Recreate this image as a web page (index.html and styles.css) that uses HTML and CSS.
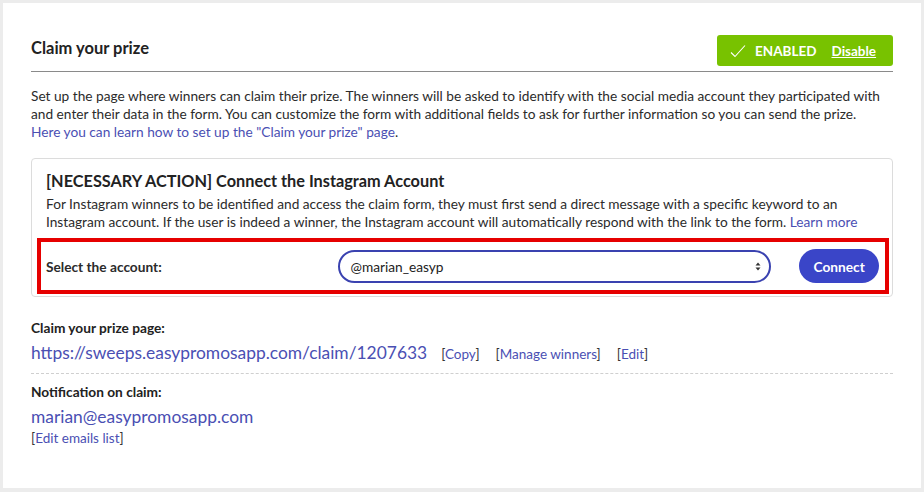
FILE: index.html
```html
<!DOCTYPE html>
<html>
<head>
<meta charset="utf-8">
<link rel="stylesheet" href="styles.css">
</head>
<body>
<div class="panel">
  <div class="header">
    <h1 class="title">Claim your prize</h1>
    <div class="badge">
      <svg class="check" width="16" height="14" viewBox="0 0 16 14"><path d="M1 8.5 L5 12.5 L15 1.5" fill="none" stroke="#fff" stroke-width="1.1"/></svg>
      <span class="badge-state">ENABLED</span>
      <a class="badge-link" href="#">Disable</a>
    </div>
  </div>
  <p class="intro">Set up the page where winners can claim their prize. The winners will be asked to identify with the social media account they participated with and enter their data in the form. You can customize the form with additional fields to ask for further information so you can send the prize.<br><a class="link" href="#">Here you can learn how to set up the "Claim your prize" page</a>.</p>
  <div class="action-box">
    <h2 class="action-title">[NECESSARY ACTION] Connect the Instagram Account</h2>
    <p class="action-text">For Instagram winners to be identified and access the claim form, they must first send a direct message with a specific keyword to an Instagram account. If the user is indeed a winner, the Instagram account will automatically respond with the link to the form. <a class="link" href="#">Learn more</a></p>
    <div class="account-row">
      <label class="account-label">Select the account:</label>
      <div class="select">
        <span>@marian_easyp</span>
        <svg class="arrows" width="6" height="9" viewBox="0 0 6 9"><path d="M0.5 3.5 L3 0.5 L5.5 3.5 Z M0.5 5.5 L3 8.5 L5.5 5.5 Z" fill="#333"/></svg>
      </div>
      <button class="connect">Connect</button>
    </div>
  </div>
  <div class="info">
    <div class="info-label">Claim your prize page:</div>
    <div class="url-row">
      <a class="big-link" href="#">https://sweeps.easypromosapp.com/claim/1207633</a>
      <span class="bracket">[<a class="link" href="#">Copy</a>]</span>
      <span class="bracket">[<a class="link" href="#">Manage winners</a>]</span>
      <span class="bracket">[<a class="link" href="#">Edit</a>]</span>
    </div>
  </div>
  <div class="info info-second">
    <div class="info-label">Notification on claim:</div>
    <div class="email"><a class="big-link" href="#">marian@easypromosapp.com</a></div>
    <div class="small"><span class="bracket">[<a class="link" href="#">Edit emails list</a>]</span></div>
  </div>
</div>
</body>
</html>
```
FILE: styles.css
```css
* { box-sizing: border-box; }
html, body { margin: 0; }
body {
  background: #ececec;
  padding: 3px 3px 4px 3px;
  font-family: Lato, "Noto Sans", sans-serif;
  color: #2b2b2b;
}
.panel {
  background: #fff;
  height: 485px;
  padding: 0 28px;
}
.header {
  display: flex;
  justify-content: space-between;
  align-items: flex-end;
  padding-top: 32px;
  padding-bottom: 5px;
  border-bottom: 1px solid #8a8a8a;
}
.title {
  margin: 0 0 8px 0;
  font-size: 16.5px;
  font-weight: 700;
  line-height: 20px;
  color: #222;
}
.badge {
  display: flex;
  align-items: center;
  height: 31px;
  width: 176px;
  background: #78c200;
  border-radius: 3px;
  padding: 0 14px 0 13px;
  color: #fff;
  font-size: 13.5px;
  font-weight: 700;
}
.check { margin-right: 9px; }
.badge-state { margin-right: 15px; }
.badge-link { color: #fff; text-decoration: underline; }
.intro {
  margin: 15px 0 0 0;
  font-size: 13.7px;
  line-height: 18px;
  color: #2b2b2b;
}
.link { color: #4a4fb3; text-decoration: none; }
.action-box {
  margin-top: 17px;
  border: 1px solid #dcdcdc;
  border-radius: 4px;
  height: 139px;
  padding: 12px 3px 0 5px;
}
.action-title {
  margin: 0 0 4px 9px;
  font-size: 16.3px;
  font-weight: 700;
  line-height: 20px;
  color: #222;
}
.action-text {
  margin: 0 0 7px 9px;
  font-size: 13.7px;
  line-height: 18px;
}
.account-row {
  display: flex;
  align-items: center;
  height: 56px;
  border: 4px solid #e60000;
  padding: 0 6px 0 5px;
}
.account-label {
  font-size: 13.7px;
  font-weight: 700;
  width: 294px;
}
.select {
  display: flex;
  align-items: center;
  justify-content: space-between;
  width: 435px;
  height: 33px;
  border: 2px solid #3a42b0;
  border-radius: 17px;
  padding: 0 8px 0 10px;
  font-size: 13.7px;
  color: #222;
}
.connect {
  margin-left: 28px;
  width: 80px;
  height: 34px;
  border: none;
  border-radius: 17px;
  background: #3a45c8;
  color: #fff;
  font-family: inherit;
  font-size: 13.7px;
  font-weight: 700;
}
.info {
  padding-top: 22px;
  padding-bottom: 9px;
  border-bottom: 1px dashed #cfcfcf;
}
.info-second { border-bottom: none; padding-top: 9px; }
.info-label {
  font-size: 13.7px;
  font-weight: 700;
  line-height: 18px;
  color: #222;
}
.url-row {
  display: flex;
  align-items: baseline;
  gap: 16px;
  margin-top: 5px;
}
.big-link {
  color: #4a4fb3;
  text-decoration: none;
  font-size: 17.4px;
  line-height: 22px;
}
.bracket { font-size: 13.5px; color: #333; }
.url-row .big-link { margin-right: -2px; }
.email { margin-top: 5px; }
.small { line-height: 18px; }
```
